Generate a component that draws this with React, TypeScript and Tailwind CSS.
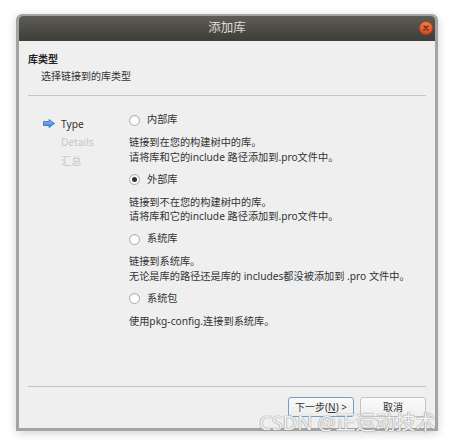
import React from 'react';

// 添加库 wizard dialog (Qt Creator, Ubuntu Ambiance look)

const options = [
  {
    label: '内部库',
    checked: false,
    lines: ['链接到在您的构建树中的库。', '请将库和它的include 路径添加到.pro文件中。'],
  },
  {
    label: '外部库',
    checked: true,
    lines: ['链接到不在您的构建树中的库。', '请将库和它的include 路径添加到.pro文件中。'],
  },
  {
    label: '系统库',
    checked: false,
    lines: ['链接到系统库。', '无论是库的路径还是库的 includes都没被添加到 .pro 文件中。'],
  },
  {
    label: '系统包',
    checked: false,
    lines: ['使用pkg-config.连接到系统库。'],
  },
];

export default function App() {
  return (
    <div className="relative min-h-[444px] bg-white pt-[14px] pl-[16px] font-['Noto_Sans','Noto_Sans_CJK_SC',sans-serif] text-[#333]">
      <div className="w-[422px] h-[417px] flex flex-col bg-[#efefef] border-x-[3px] border-b-[3px] border-t-2 border-[#a4a4a4] rounded-t-[6px] shadow-[0_2px_10px_rgba(0,0,0,0.18)]">
        {/* title bar */}
        <div className="relative h-[25px] shrink-0 flex items-center justify-center rounded-t-[4px] bg-gradient-to-b from-[#5f5d57] to-[#3d3c38]">
          <span className="text-[12.5px] text-[#dfdbd2]">添加库</span>
          <CloseButton />
        </div>

        {/* page header */}
        <div className="pt-[9.5px] px-[9px] text-[10px] leading-[17px]">
          <p className="font-bold text-[#222]">库类型</p>
          <p className="pl-[13px]">选择链接到的库类型</p>
        </div>
        <div className="mt-[10.5px] mx-[9px] h-px bg-[#c6c6c6]" />

        {/* body */}
        <div className="flex-1 flex items-start text-[10.2px]">
          <div className="w-[110px] shrink-0 pt-[18.5px] pl-[24px] leading-[18.5px]">
            <div className="flex items-center gap-[6px]">
              <StepArrow />
              <span className="text-[#333]">Type</span>
            </div>
            <p className="pl-[18px] text-[#c6c6c6]">Details</p>
            <p className="pl-[18px] text-[#c6c6c6]">汇总</p>
          </div>

          <div className="pt-[14px] flex flex-col gap-[5px]">
            {options.map((o) => (
              <React.Fragment key={o.label}>
                <div className="h-[20px] flex items-center gap-[7px]">
                  <Radio checked={o.checked} />
                  <span>{o.label}</span>
                </div>
                <div className="leading-[14.5px] mb-[0.5px]">
                  {o.lines.map((l) => (
                    <p key={l} className="whitespace-nowrap">{l}</p>
                  ))}
                </div>
              </React.Fragment>
            ))}
          </div>
        </div>

        <div className="mx-[9px] h-px bg-[#c2c2c2]" />
        <div className="pt-[10px] pb-[11px] pr-[9px] flex justify-end gap-[6px] text-[10px]">
          <button className="w-[66px] h-[20px] rounded-[3px] border border-[#6f9fd2] bg-gradient-to-b from-[#fafafa] to-[#ececec] text-[#333]">
            下一步(<span className="underline">N</span>) &gt;
          </button>
          <button className="w-[66px] h-[20px] rounded-[3px] border border-[#c4c4c4] bg-gradient-to-b from-[#fbfbfb] to-[#efefef] text-[#333]">
            取消
          </button>
        </div>
      </div>

      {/* csdn watermark */}
      <span className="absolute left-[259px] top-[411px] text-[20px] leading-[24px] text-[#f2f2f2] whitespace-nowrap [text-shadow:0_0_1px_#8a8a8a,0_0_1px_#8a8a8a]">
        CSDN @正运动技术
      </span>
    </div>
  );
}

function CloseButton() {
  return (
    <div className="absolute right-[2px] top-[5px] w-[14px] h-[14px] rounded-full bg-gradient-to-b from-[#f47c4b] to-[#d9461a] border border-[#b8421c] flex items-center justify-center">
      <svg width="6" height="6" viewBox="0 0 6 6">
        <path d="M1 1 L5 5 M5 1 L1 5" stroke="#5a2a18" strokeWidth="1.3" strokeLinecap="round" />
      </svg>
    </div>
  );
}

function StepArrow() {
  return (
    <svg width="12" height="9" viewBox="0 0 12 9">
      <defs>
        <linearGradient id="arrowFill" x1="0" y1="0" x2="0" y2="1">
          <stop offset="0" stopColor="#8dbcf0" />
          <stop offset="1" stopColor="#3a7fd4" />
        </linearGradient>
      </defs>
      <path d="M0.5 2.5 H6 V0.5 L11.5 4.5 L6 8.5 V6.5 H0.5 Z" fill="url(#arrowFill)" stroke="#2f6cbd" strokeWidth="0.8" strokeLinejoin="round" />
    </svg>
  );
}

function Radio({ checked }: { checked: boolean }) {
  return (
    <span className="w-[11px] h-[11px] rounded-full border border-[#a9a9a9] bg-white flex items-center justify-center shadow-[inset_0_1px_1px_rgba(0,0,0,0.08)]">
      {checked && <span className="w-[5px] h-[5px] rounded-full bg-[#2e2e2e]" />}
    </span>
  );
}
